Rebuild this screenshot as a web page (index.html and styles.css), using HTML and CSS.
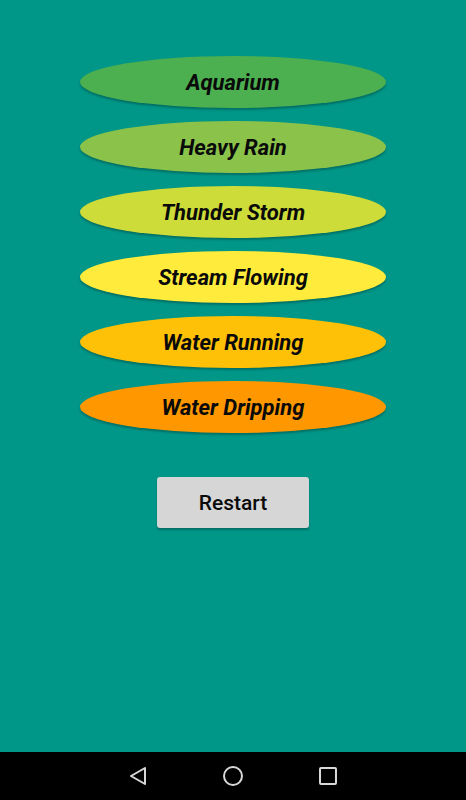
FILE: index.html
```html
<!DOCTYPE html>
<html lang="en">
<head>
    <meta charset="UTF-8">
    <meta name="viewport" content="width=device-width, initial-scale=1.0">
    <title>Sounds</title>
    <link rel="stylesheet" href="styles.css">
</head>
<body>
    <div class="screen">
        <div class="sounds">
            <button class="sound aquarium">Aquarium</button>
            <button class="sound rain">Heavy Rain</button>
            <button class="sound storm">Thunder Storm</button>
            <button class="sound stream">Stream Flowing</button>
            <button class="sound running">Water Running</button>
            <button class="sound dripping">Water Dripping</button>
        </div>
        <button class="restart">Restart</button>
    </div>
    <div class="navbar">
        <svg width="20" height="20" viewBox="0 0 20 20"><path d="M17 2 L3 10 L17 18 Z" fill="none" stroke="#d8d8d8" stroke-width="2" stroke-linejoin="round"/></svg>
        <svg width="22" height="22" viewBox="0 0 22 22"><circle cx="11" cy="11" r="9" fill="none" stroke="#d8d8d8" stroke-width="2"/></svg>
        <svg width="20" height="20" viewBox="0 0 20 20"><rect x="2" y="2" width="16" height="16" rx="1" fill="none" stroke="#d8d8d8" stroke-width="2"/></svg>
    </div>
</body>
</html>
```

FILE: styles.css
```css
body {
    margin: 0;
    font-family: Roboto, "Noto Sans", sans-serif;
    background-color: #009688;
}
.screen {
    height: 752px;
    display: flex;
    flex-direction: column;
    align-items: center;
    padding-top: 56px;
    box-sizing: border-box;
}
.sounds {
    display: flex;
    flex-direction: column;
    gap: 13px;
}
.sound {
    width: 306px;
    height: 52px;
    border: none;
    border-radius: 50%;
    font-family: Roboto, sans-serif;
    font-size: 22px;
    font-weight: bold;
    font-style: italic;
    color: #0a0a0a;
    box-shadow: 0 2px 2px rgba(0, 0, 0, 0.25);
    padding: 0;
}
.aquarium { background-color: #4CAF50; }
.rain { background-color: #8BC34A; }
.storm { background-color: #CDDC39; }
.stream { background-color: #FFEB3B; }
.running { background-color: #FFC107; }
.dripping { background-color: #FF9800; }
.restart {
    margin-top: 44px;
    width: 152px;
    height: 51px;
    border: none;
    border-radius: 3px;
    background-color: #D6D6D6;
    font-family: Roboto, sans-serif;
    font-size: 21px;
    font-weight: 500;
    color: #0a0a0a;
    box-shadow: 0 2px 2px rgba(0, 0, 0, 0.25);
}
.navbar {
    height: 48px;
    background-color: #000;
    display: flex;
    justify-content: center;
    align-items: center;
    gap: 74px;
}
```
